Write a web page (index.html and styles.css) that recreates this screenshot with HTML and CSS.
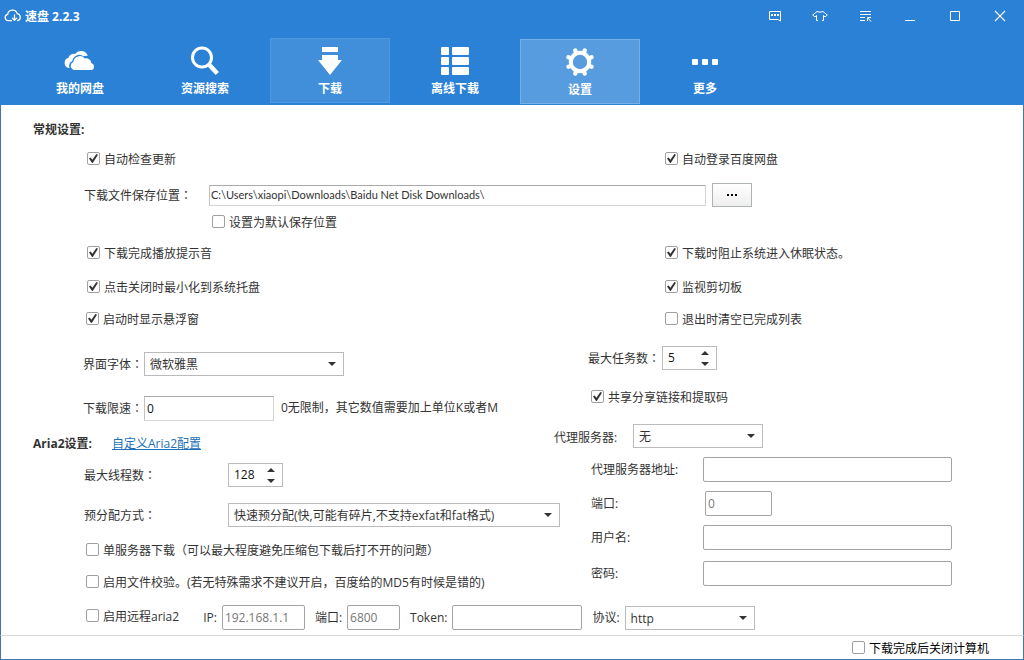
FILE: index.html
```html
<!DOCTYPE html>
<html lang="zh-CN">
<head>
<meta charset="utf-8">
<title>速盘 2.2.3</title>
<link rel="stylesheet" href="styles.css">
</head>
<body>
<header class="header">
  <div class="titlebar">
    <svg class="logo" width="18" height="14" viewBox="0 0 18 14" fill="none" stroke="#fff" stroke-width="1.3"><path d="M8 11.7H4.2A3.2 3.2 0 0 1 3.6 5.4 4.9 4.9 0 0 1 13.2 4.700 3.600 3.600 0 0 1 13.700 11.700H13"/><path d="M10.500 5.500V11M8 8.900l2.500 2.500 2.500-2.500"/></svg>
    <h1 class="title">速盘 2.2.3</h1>
    <div class="winbuttons">
      <button class="winbtn" aria-label="反馈"><svg width="16" height="16" viewBox="0 0 16 16" fill="none" stroke="#fff"><path d="M2.500 3.500h11v9.500l-2.500-1.500H2.500z"/><path d="M4 7h2M7 7h2M10 7h2" stroke-width="2"/></svg></button>
      <button class="winbtn" aria-label="皮肤"><svg width="16" height="16" viewBox="0 0 16 16" fill="none" stroke="#fff"><path d="M4.500 12.500V7.500L3 9 .7 7 5 3.500Q8 5 11 3.500L15.300 7 13 9l-1.500-1.500v5M4.500 12.500h1.500M10 12.500h1.500"/></svg></button>
      <button class="winbtn" aria-label="菜单"><svg width="16" height="16" viewBox="0 0 16 16" fill="none" stroke="#fff"><path d="M3 3.500h11M3 6.500h11M3 9.500h5M3 12.500h5M10.500 13V9.500H14M11 10l3 3.500"/></svg></button>
      <button class="winbtn" aria-label="最小化"><svg width="16" height="16" viewBox="0 0 16 16" fill="none" stroke="#fff"><path d="M3 12.500h10"/></svg></button>
      <button class="winbtn" aria-label="最大化"><svg width="16" height="16" viewBox="0 0 16 16" fill="none" stroke="#fff"><path d="M3.500 3.500h9v9h-9z"/></svg></button>
      <button class="winbtn" aria-label="关闭"><svg width="16" height="16" viewBox="0 0 16 16" fill="none" stroke="#fff" stroke-width="1.100"><path d="M3 3l10 10M13 3L3 13"/></svg></button>
    </div>
  </div>
  <nav class="nav">
    <button class="tab"><svg width="32" height="32" viewBox="0 0 32 32" fill="#fff"><path d="M4.500 23A5.300 5.300 0 0 1 4.500 12.800 5.500 5.500 0 0 1 11 9 7.300 7.300 0 0 1 23.800 11Q21.500 10.500 19.500 11.300A7 7 0 0 0 8.300 16Q4 18 5.500 23z"/><path d="M9.500 25A4.300 4.300 0 0 1 9.300 17 6.500 6.500 0 0 1 20.800 13.500 5.200 5.200 0 0 1 27.300 18 3.700 3.700 0 0 1 27.800 25z"/></svg><span>我的网盘</span></button>
    <button class="tab"><svg width="32" height="32" viewBox="0 0 32 32" fill="none" stroke="#fff"><circle cx="13" cy="12.500" r="9.500" stroke-width="3"/><path d="M19.500 19l8.800 9.500" stroke-width="4.500"/></svg><span>资源搜索</span></button>
    <button class="tab tab-recent"><svg width="32" height="32" viewBox="0 0 32 32" fill="#fff"><path d="M8 2h16v5H8zM8 10h16v5h4L16 30 4 15h4z"/></svg><span>下载</span></button>
    <button class="tab"><svg width="32" height="32" viewBox="0 0 32 32" fill="#fff"><rect x="2" y="2" width="8" height="8" rx="1"/><rect x="13" y="2" width="17" height="8" rx="1"/><rect x="2" y="12" width="8" height="8" rx="1"/><rect x="13" y="12" width="17" height="8" rx="1"/><rect x="2" y="22" width="8" height="8" rx="1"/><rect x="13" y="22" width="17" height="8" rx="1"/></svg><span>离线下载</span></button>
    <button class="tab tab-current" aria-current="page"><svg width="32" height="32" viewBox="0 0 32 32"><circle cx="16" cy="16" r="9.200" fill="none" stroke="#fff" stroke-width="4"/><g stroke="#fff" stroke-width="4.200" stroke-linecap="round"><path d="M11.600 5.400l-.4-1M20.400 5.400l.4-1M26.600 11.600l1-.4M26.600 20.400l1 .4M20.400 26.600l.4 1M11.600 26.600l-.4 1M5.400 20.400l-1 .4M5.400 11.600l-1-.4"/></g></svg><span>设置</span></button>
    <button class="tab"><svg width="32" height="32" viewBox="0 0 32 32" fill="#fff"><rect x="3" y="14" width="6" height="6" rx="1"/><rect x="13" y="14" width="6" height="6" rx="1"/><rect x="23" y="14" width="6" height="6" rx="1"/></svg><span>更多</span></button>
  </nav>
</header>

<main class="main">
  <section class="general">
    <h2 class="heading">常规设置:</h2>
    <div class="pair">
      <label class="check"><input type="checkbox" checked>自动检查更新</label>
      <label class="check"><input type="checkbox" checked>自动登录百度网盘</label>
    </div>
    <div class="pathrow">
      <label class="pathlabel" for="path">下载文件保存位置<span class="colon" lang="zh-TW">：</span></label>
      <input class="box pathbox" id="path" type="text" value="C:\Users\xiaopi\Downloads\Baidu Net Disk Downloads\">
      <button class="browse" aria-label="浏览"><svg width="12" height="4" viewBox="0 0 12 4"><path d="M1 1h2v2H1zM5 1h2v2H5zM9 1h2v2H9z"/></svg></button>
    </div>
    <label class="check defaultpath"><input type="checkbox">设置为默认保存位置</label>
    <div class="pair sound">
      <label class="check"><input type="checkbox" checked>下载完成播放提示音</label>
      <label class="check"><input type="checkbox" checked>下载时阻止系统进入休眠状态。</label>
    </div>
    <div class="pair tray">
      <label class="check"><input type="checkbox" checked>点击关闭时最小化到系统托盘</label>
      <label class="check"><input type="checkbox" checked>监视剪切板</label>
    </div>
    <div class="pair float">
      <label class="check"><input type="checkbox" checked>启动时显示悬浮窗</label>
      <label class="check"><input type="checkbox">退出时清空已完成列表</label>
    </div>
  </section>

  <div class="columns">
    <section class="left">
      <div class="row">
        <label class="shortlabel" for="font">界面字体<span class="colon" lang="zh-TW">：</span></label>
        <span class="select fontselect"><select id="font"><option>微软雅黑</option></select></span>
      </div>
      <div class="row speed">
        <label class="shortlabel" for="limit">下载限速<span class="colon" lang="zh-TW">：</span></label>
        <input class="box limit" id="limit" type="text" value="0">
        <span class="hint">0无限制，其它数值需要加上单位K或者M</span>
      </div>
      <div class="row aria">
        <h2 class="heading">Aria2设置:</h2>
        <a class="link" href="#">自定义Aria2配置</a>
      </div>
      <div class="row threads">
        <label class="longlabel" for="threads">最大线程数<span class="colon" lang="zh-TW">：</span></label>
        <span class="spin"><input id="threads" type="number" value="128"><span class="steps"><button class="up" aria-label="增加"></button><button class="down" aria-label="减少"></button></span></span>
      </div>
      <div class="row alloc">
        <label class="longlabel" for="alloc">预分配方式<span class="colon" lang="zh-TW">：</span></label>
        <span class="select allocselect"><select id="alloc"><option>快速预分配(快,可能有碎片,不支持exfat和fat格式)</option></select></span>
      </div>
      <label class="check single"><input type="checkbox">单服务器下载（可以最大程度避免压缩包下载后打不开的问题）</label>
      <label class="check verify"><input type="checkbox">启用文件校验。(若无特殊需求不建议开启，百度给的MD5有时候是错的)</label>
    </section>

    <section class="right">
      <div class="row tasks">
        <label class="tasklabel" for="tasks">最大任务数<span class="colon" lang="zh-TW">：</span></label>
        <span class="spin"><input id="tasks" type="number" value="5"><span class="steps"><button class="up" aria-label="增加"></button><button class="down" aria-label="减少"></button></span></span>
      </div>
      <label class="check share"><input type="checkbox" checked>共享分享链接和提取码</label>
      <div class="row proxy">
        <label class="proxylabel" for="proxy">代理服务器:</label>
        <span class="select midselect"><select id="proxy"><option>无</option></select></span>
      </div>
      <div class="row field">
        <label class="fieldlabel" for="addr">代理服务器地址:</label>
        <input class="box strong grow" id="addr" type="text">
      </div>
      <div class="row field">
        <label class="fieldlabel" for="port">端口:</label>
        <input class="box strong muted port" id="port" type="text" value="0">
      </div>
      <div class="row field">
        <label class="fieldlabel" for="user">用户名:</label>
        <input class="box strong grow" id="user" type="text">
      </div>
      <div class="row field last">
        <label class="fieldlabel" for="pass">密码:</label>
        <input class="box strong grow" id="pass" type="password">
      </div>
    </section>
  </div>

  <div class="remote">
    <label class="check enable"><input type="checkbox">启用远程aria2</label>
    <label class="inline" for="ip">IP:</label>
    <input class="box strong muted ip" id="ip" type="text" value="192.168.1.1">
    <label class="inline" for="rport">端口:</label>
    <input class="box strong muted rport" id="rport" type="text" value="6800">
    <label class="inline" for="token">Token:</label>
    <input class="box strong token" id="token" type="text">
    <label class="inline" for="proto">协议:</label>
    <span class="select midselect"><select id="proto"><option>http</option></select></span>
  </div>
</main>

<footer class="footer">
  <label class="check"><input type="checkbox">下载完成后关闭计算机</label>
</footer>
</body>
</html>
```
FILE: styles.css
```css
* { box-sizing: border-box; }

body {
  margin: 0;
  min-height: 100vh;
  display: flex;
  flex-direction: column;
  background: #fff;
  color: #333;
  font: 12px/24px "Open Sans", "Noto Sans CJK SC", sans-serif;
  white-space: nowrap;
}

button, input, select { font: inherit; color: inherit; margin: 0; padding: 0; }
button { border: 0; background: none; }

/* Header */
.header { background: #2b81d5; color: #fff; height: 105px; }
.titlebar { display: flex; align-items: center; height: 32px; padding-left: 4px; }
.title { margin: 0 auto 0 3px; padding-top: 2px; font-size: 12px; font-weight: 700; }
.winbuttons { display: flex; }
.winbtn { width: 45px; height: 32px; display: grid; place-items: center; }
.winbtn:last-child { margin-right: 2px; }

.nav { display: flex; gap: 5px; padding: 6px 20px 0; }
.tab {
  width: 120px;
  height: 65px;
  padding-top: 6px;
  border: 1px solid transparent;
  display: flex;
  flex-direction: column;
  align-items: center;
  line-height: 24px;
  font-weight: 700;
}
.tab svg { flex: none; }
.tab-recent { background: #418fdb; border-color: #4e98df; }
.tab-current { background: #579cdf; border-color: #76b0e8; margin-top: 1px; }

/* Settings page */
.main { flex: 1; border: solid #3f78ad; border-width: 0 1px; padding-top: 13px; }
.heading { margin: 0; padding-left: 32px; font-size: 12px; font-weight: 700; }

.check { display: flex; align-items: center; gap: 4px; height: 24px; padding-top: 2px; }
.check input {
  appearance: none;
  width: 13px;
  height: 13px;
  margin-bottom: 3px;
  border: 1px solid #a0a0a0;
  border-radius: 2px;
  background: #fff;
  display: grid;
  place-items: center;
}
.check input:checked::after {
  content: "";
  width: 9px;
  height: 9px;
  background: #333;
  clip-path: polygon(0 50%, 18% 40%, 38% 65%, 82% 0, 100% 8%, 42% 100%, 34% 100%);
}

.pair { display: grid; grid-template-columns: 578fr 358fr; padding-left: 86px; margin-top: 5px; }
.pair.sound { margin-top: 7px; }
.pair.tray { margin-top: 10px; }
.pair.float { margin-top: 8px; padding-left: 85px; grid-template-columns: 579fr 358fr; }

.pathrow { display: flex; align-items: center; height: 24px; margin-top: 12px; padding: 0 271px 0 83px; }
.pathlabel { width: 125px; }
.defaultpath { padding-left: 211px; margin-top: 3px; }

.colon { font-family: "Noto Sans CJK TC", sans-serif; }

.box {
  height: 25px;
  padding: 0 2px;
  border: 1px solid #d5d5d5;
  border-top-color: #aaa;
  border-left-color: #c4c4c4;
  background: #fff;
  min-width: 0;
  outline: 0;
}
.pathbox { flex: 1; height: 21px; padding: 0 1px; font-family: Lato, sans-serif; font-size: 11px; }
.strong { border-color: #a3a3a3; border-radius: 2px; }
.muted { color: #777; }
.browse {
  width: 40px;
  height: 24px;
  margin-left: 6px;
  border: 1px solid #adb2b5;
  background: linear-gradient(#fff, #eee);
  display: grid;
  place-items: center;
}

.select { position: relative; display: block; height: 24px; }
.select select {
  appearance: none;
  width: 100%;
  height: 24px;
  padding: 0 5px;
  border: 1px solid #bbb;
  border-radius: 0;
  background: #fff;
  display: block;
}
.select::after {
  content: "";
  position: absolute;
  right: 8px;
  top: 10px;
  border: 4px solid transparent;
  border-top-color: #333;
  border-bottom: 0;
  pointer-events: none;
}

.spin { display: flex; width: 55px; height: 24px; border: 1px solid #bbb; background: #fff; }
.spin input { appearance: textfield; flex: 1; min-width: 0; border: 0; padding-left: 5px; background: none; color: #111; }
.spin input::-webkit-inner-spin-button { appearance: none; }
.steps { display: flex; flex-direction: column; width: 22px; }
.steps button { flex: 1; display: grid; justify-items: center; }
.up { align-items: end; padding-bottom: 3px; }
.down { align-items: start; padding-top: 4px; }
.up::after { content: ""; border: 4px solid transparent; border-bottom-color: #333; border-top: 0; }
.down::after { content: ""; border: 4px solid transparent; border-top-color: #333; border-bottom: 0; }

.columns { display: grid; grid-template-columns: 553fr 469fr; }
.left, .right { min-width: 0; }
.row { display: flex; align-items: center; height: 24px; }

.left { padding-top: 21px; }
.shortlabel { padding-left: 82px; width: 143px; }
.fontselect { width: 200px; }
.speed { margin-top: 20px; }
.limit { width: 130px; color: #111; }
.hint { margin-left: 7px; }
.aria { margin-top: 12px; }
.link { margin-left: 20px; color: #1c6fb8; text-decoration: underline; }
.threads { margin-top: 7px; }
.longlabel { padding-left: 83px; width: 227px; flex: none; }
.alloc { margin-top: 16px; }
.allocselect { width: 332px; flex: none; }
.single { padding-left: 85px; margin-top: 11px; }
.verify { padding-left: 85px; margin-top: 8px; }

.right { padding-top: 15px; }
.tasks { padding-left: 34px; }
.tasklabel { width: 74px; }
.share { padding-left: 37px; margin-top: 15px; }
.proxy { margin-top: 15px; }
.proxylabel { width: 79px; padding-top: 3px; }
.midselect { width: 130px; }
.field { margin-top: 9px; height: 25px; padding: 0 71px 0 37px; }
.field.last { margin-top: 11px; }
.fieldlabel { width: 112px; flex: none; }
.grow { flex: 1; }
.port { width: 67px; margin-left: 2px; }

.remote { display: flex; align-items: center; height: 25px; margin-top: 11px; padding-left: 85px; }
.inline { margin-right: 5px; margin-left: 10px; }
.enable { margin: 0 14px 4px 0; }
.ip { width: 83px; }
.rport { width: 53px; }
.token { width: 130px; }

/* Status bar */
.footer {
  display: flex;
  justify-content: flex-end;
  height: 25px;
  padding-right: 34px;
  border: 1px solid #3f78ad;
  border-top-color: #d8d8d8;
  color: #000;
}
```
